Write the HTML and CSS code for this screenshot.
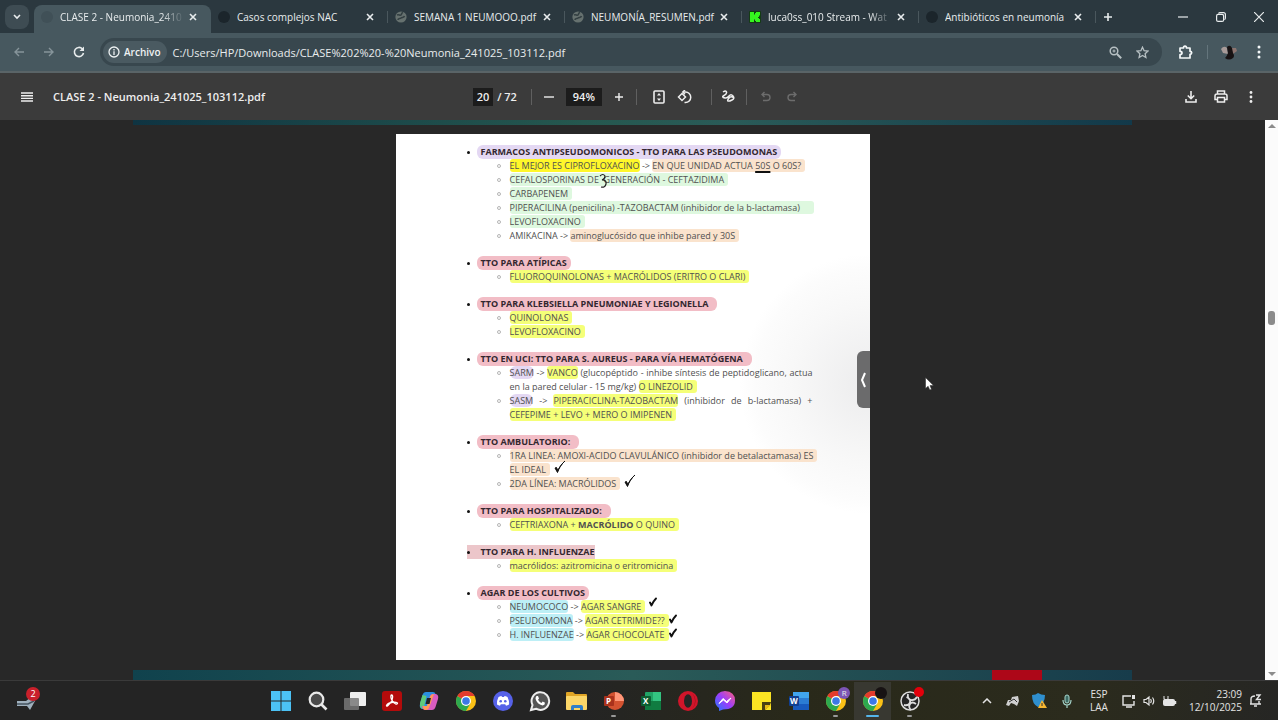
FILE: index.html
```
<!DOCTYPE html>
<html lang="es">
<head>
    <meta charset="UTF-8">
    <meta name="viewport" content="width=device-width, initial-scale=1.0">
    <title>CLASE 2 - Neumonia_241025_103112.pdf</title>
    <link rel="stylesheet" href="styles.css">
</head>
<body>

<svg class="defs" aria-hidden="true">
    <defs>
        <symbol id="close" viewBox="0 0 8 8"><path d="M1 1l6 6M7 1l-6 6" stroke="currentColor" stroke-width="1.6"/></symbol>
        <symbol id="globe" viewBox="0 0 12 12">
            <circle cx="6" cy="6" r="5.6" fill="#66716f"/>
            <path d="M2 4c2-1 3 1 4 0s0-2 2-2.500M3 9c0-2 2-1 3-2s3 0 3.500-2" stroke="#333f42" stroke-width="1.600" fill="none"/>
        </symbol>
        <symbol id="chrome" viewBox="0 0 20 20">
            <circle cx="10" cy="10" r="10" fill="#fbc116"/>
            <path d="M10 10L1.340 5A10 10 0 0 0 10 20l4.300-7.500z" fill="#2da94f"/>
            <path d="M10 10L1.340 5A10 10 0 0 1 18.660 5H10z" fill="#e33b2e"/>
            <circle cx="10" cy="10" r="5" fill="#fff"/>
            <circle cx="10" cy="10" r="3.800" fill="#3b78e7"/>
        </symbol>
        <symbol id="tick" viewBox="0 0 12 14"><path d="M1 8l2.500 4.500C5 8 7.500 4 11 1 8 3.500 5.500 7 3.800 10.500L2.500 7.500z" fill="#111" stroke="#111" stroke-width="1" stroke-linejoin="round"/></symbol>
        <symbol id="bold-tick" viewBox="0 0 8 10"><path d="M1 5.500L2.500 8.500Q4 4.500 7 1.500" fill="none" stroke="#111" stroke-width="1.900" stroke-linecap="round" stroke-linejoin="round"/></symbol>
    </defs>
</svg>

<header class="tabstrip">
    <button class="tab-search" aria-label="Buscar pestañas"><svg width="8" height="6" viewBox="0 0 8 6"><path d="M1 1l3 3 3-3" fill="none" stroke="currentColor" stroke-width="1.600"/></svg></button>
    <nav class="tabs">
        <div class="tab active"><i class="favicon faint"></i><a href="#">CLASE 2 - Neumonia_2410</a><button aria-label="Cerrar"><svg width="8" height="8"><use href="#close"/></svg></button></div>
        <div class="tab"><i class="favicon"></i><a href="#">Casos complejos NAC</a><button aria-label="Cerrar"><svg width="8" height="8"><use href="#close"/></svg></button></div>
        <div class="tab"><svg class="favicon-svg" width="12" height="12"><use href="#globe"/></svg><a href="#">SEMANA 1 NEUMOOO.pdf</a><button aria-label="Cerrar"><svg width="8" height="8"><use href="#close"/></svg></button></div>
        <div class="tab"><svg class="favicon-svg" width="12" height="12"><use href="#globe"/></svg><a href="#">NEUMONÍA_RESUMEN.pdf</a><button aria-label="Cerrar"><svg width="8" height="8"><use href="#close"/></svg></button></div>
        <div class="tab"><svg class="favicon-svg" width="12" height="12" viewBox="0 0 12 12"><rect width="12" height="12" rx="1" fill="#143c14"/><path d="M1 1h4v2.500h1V2h1V1h4v3.500h-1V6H9v1h1v1h1v3H7v-1H6V8.500H5V11H1z" fill="#35f51f"/></svg><a href="#">luca0ss_010 Stream - Wat</a><button aria-label="Cerrar"><svg width="8" height="8"><use href="#close"/></svg></button></div>
        <div class="tab"><i class="favicon"></i><a href="#">Antibióticos en neumonía</a><button aria-label="Cerrar"><svg width="8" height="8"><use href="#close"/></svg></button></div>
    </nav>
    <button class="new-tab" aria-label="Nueva pestaña"><svg width="10" height="10" viewBox="0 0 10 10"><path d="M5 1v8M1 5h8" stroke="currentColor" stroke-width="1.600"/></svg></button>
    <div class="window-buttons">
        <button aria-label="Minimizar"><svg width="10" height="10" viewBox="0 0 10 10"><path d="M0 5h10" stroke="currentColor" stroke-width="1.200"/></svg></button>
        <button aria-label="Restaurar"><svg width="10" height="10" viewBox="0 0 10 10" fill="none" stroke="currentColor" stroke-width="1.200"><rect x=".6" y="2.400" width="7" height="7" rx="1.500"/><path d="M2.500 1.500Q3 .6 4 .6h3.400q2 0 2 2V6q0 1.200-1 1.600"/></svg></button>
        <button aria-label="Cerrar ventana"><svg width="10" height="10" viewBox="0 0 10 10"><path d="M0 0l10 10M10 0L0 10" stroke="currentColor" stroke-width="1.200"/></svg></button>
    </div>
</header>

<div class="toolbar">
    <button class="dim" aria-label="Atrás"><svg width="10" height="10" viewBox="0 0 10 10"><path d="M10 5H1M5 1L1 5l4 4" fill="none" stroke="currentColor" stroke-width="1.400"/></svg></button>
    <button class="dim" aria-label="Adelante"><svg width="10" height="10" viewBox="0 0 10 10"><path d="M0 5h9M5 1l4 4-4 4" fill="none" stroke="currentColor" stroke-width="1.400"/></svg></button>
    <button aria-label="Recargar"><svg width="12" height="12" viewBox="0 0 12 12"><path d="M10.500 7A4.600 4.600 0 1 1 9.300 2.800L10.500 4" fill="none" stroke="currentColor" stroke-width="1.600"/><path d="M11 .5v4.500H6.500z" fill="currentColor"/></svg></button>
    <div class="address">
        <button class="chip"><svg width="12" height="12" viewBox="0 0 12 12"><circle cx="6" cy="6" r="5" fill="none" stroke="currentColor" stroke-width="1.300"/><path d="M6 5.300V9M6 3v1.400" stroke="currentColor" stroke-width="1.300"/></svg>Archivo</button>
        <input type="text" aria-label="Dirección" value="C:/Users/HP/Downloads/CLASE%202%20-%20Neumonia_241025_103112.pdf">
        <button aria-label="Zoom"><svg width="13" height="13" viewBox="0 0 13 13" fill="none" stroke="currentColor" stroke-width="1.500"><circle cx="5" cy="5" r="3.800"/><path d="M8 8l4.200 4.200" stroke-width="2"/><path d="M3.500 5h3M5 3.500v3" stroke-width="1"/></svg></button>
        <button aria-label="Favoritos"><svg width="13" height="13" viewBox="0 0 13 13"><path d="M6.500 1.200l1.600 3.500 3.900.4-2.900 2.600.8 3.800-3.400-2-3.400 2 .8-3.800L1 5.100l3.900-.4z" fill="none" stroke="currentColor" stroke-width="1.300"/></svg></button>
    </div>
    <button class="bright" aria-label="Extensiones"><svg width="15" height="15" viewBox="0 0 15 15"><path d="M2 3h3.500q0-1.800 1.500-1.800T8.500 3H12v3.300q1.700 0 1.700 1.500T12 9.300V13H2V9.500q2 0 2-1.600T2 6.300z" fill="none" stroke="currentColor" stroke-width="1.700" stroke-linejoin="round"/></svg></button>
    <span class="separator"></span>
    <button class="avatar" aria-label="Perfil"><svg width="16" height="16" viewBox="0 0 16 16"><path d="M0 5q3-4 6-1l1 6-5-1z" fill="#a79a98"/><path d="M10 4l5 0 1 3-4 3z" fill="#8b7470"/><path d="M6 3q3-3 5 1l1 5q2 3 0 5-4 3-8 0 2-2 3-5z" fill="#171213"/></svg></button>
    <button class="bright menu" aria-label="Menú"><svg width="4" height="14" viewBox="0 0 4 14" fill="currentColor"><circle cx="2" cy="2" r="1.500"/><circle cx="2" cy="7" r="1.500"/><circle cx="2" cy="12" r="1.500"/></svg></button>
</div>

<div class="pdf-bar">
    <div class="pdf-left">
        <button aria-label="Menú lateral"><svg width="12" height="10" viewBox="0 0 12 10"><path d="M0 1h12M0 3.700h12M0 6.400h12M0 9h12" stroke="currentColor" stroke-width="1.400"/></svg></button>
        <h1>CLASE 2 - Neumonia_241025_103112.pdf</h1>
    </div>
    <div class="pdf-center">
        <input class="page-number" type="text" aria-label="Página" value="20">
        <span class="page-total">/ 72</span>
        <span class="separator"></span>
        <button aria-label="Alejar"><svg width="10" height="10" viewBox="0 0 10 10"><path d="M0 5h10" stroke="currentColor" stroke-width="1.400"/></svg></button>
        <input class="zoom-level" type="text" aria-label="Nivel de zoom" value="94%">
        <button aria-label="Acercar"><svg width="10" height="10" viewBox="0 0 10 10"><path d="M5 1v8M1 5h8" stroke="currentColor" stroke-width="1.400"/></svg></button>
        <span class="separator"></span>
        <button class="fit" aria-label="Ajustar a la página"><svg width="12" height="14" viewBox="0 0 12 14"><rect x="1" y="1" width="10" height="12" rx="1" fill="none" stroke="currentColor" stroke-width="1.600"/><path d="M6 3l2 2.500H4zM6 11l2-2.500H4z" fill="currentColor"/></svg></button>
        <button class="rotate" aria-label="Girar"><svg width="15" height="14" viewBox="0 0 15 14" fill="none" stroke="currentColor" stroke-width="1.500"><path d="M5 3.500L8.500 7 5 10.500 1.500 7z"/><path d="M6 2h2.500a5 5 0 0 1 0 10.500H7.500"/><path d="M8 0L5.800 2 8 4.200"/></svg></button>
        <span class="separator"></span>
        <button aria-label="Dibujar"><svg width="13" height="13" viewBox="0 0 13 13"><path d="M1 2q3-2 3.500 0T2 5.500 3 8q2 .5 4-2t4 0-1 4-4 1 1-3 5 0" fill="none" stroke="currentColor" stroke-width="1.500"/></svg></button>
        <span class="separator"></span>
        <button class="off" aria-label="Deshacer"><svg width="10" height="11" viewBox="0 0 10 11"><path d="M3.500 1L1 3.500 3.500 6M1 3.500h5a3 3 0 0 1 0 6H2" fill="none" stroke="currentColor" stroke-width="1.400"/></svg></button>
        <button class="off" aria-label="Rehacer"><svg width="10" height="11" viewBox="0 0 10 11"><path d="M6.500 1L9 3.500 6.500 6M9 3.500H4a3 3 0 0 0 0 6h4" fill="none" stroke="currentColor" stroke-width="1.400"/></svg></button>
    </div>
    <div class="pdf-right">
        <button aria-label="Descargar"><svg width="12" height="12" viewBox="0 0 12 12"><path d="M6 0v7M2.800 4.500L6 7.700l3.200-3.200M1 8v3h10V8" fill="none" stroke="currentColor" stroke-width="1.600"/></svg></button>
        <button aria-label="Imprimir"><svg width="14" height="13" viewBox="0 0 14 13" fill="none" stroke="currentColor" stroke-width="1.500"><path d="M3.500 4V1h7v3M3.500 9.500H1V6q0-2 2-2h8q2 0 2 2v3.500h-2.500"/><path d="M3.500 7.500h7V12h-7z"/></svg></button>
        <button aria-label="Más"><svg width="4" height="12" viewBox="0 0 4 12" fill="currentColor"><circle cx="2" cy="1.500" r="1.400"/><circle cx="2" cy="6" r="1.400"/><circle cx="2" cy="10.500" r="1.400"/></svg></button>
    </div>
</div>

<main class="viewer">
    <div class="pages">
        <div class="slide previous"></div>
        <article class="page">
            <section>
                <h2><mark class="purple">FARMACOS ANTIPSEUDOMONICOS - TTO PARA LAS PSEUDOMONAS</mark></h2>
                <ul>
                    <li><mark class="strong">EL MEJOR ES CIPROFLOXACINO</mark> -&gt; <mark class="orange">EN QUE UNIDAD ACTUA <u>50S</u> O 60S?</mark></li>
                    <li><mark class="green">CEFALOSPORINAS DE<svg class="note three" width="9" height="16" viewBox="0 0 9 16"><path d="M1 3q3-3 5 0 0 3-3 4 5 0 4 4-1 4-5 3" fill="none" stroke="#222" stroke-width="1.200"/></svg> &nbsp;GENERACIÓN - CEFTAZIDIMA</mark></li>
                    <li><mark class="green">CARBAPENEM</mark></li>
                    <li class="one-line"><mark class="green long">PIPERACILINA (penicilina) -TAZOBACTAM (inhibidor de la b-lactamasa)</mark></li>
                    <li><mark class="green">LEVOFLOXACINO</mark></li>
                    <li>AMIKACINA -&gt; <mark class="orange">aminoglucósido que inhibe pared y 30S</mark></li>
                </ul>
            </section>
            <section>
                <h2><mark class="pink">TTO PARA ATÍPICAS</mark></h2>
                <ul>
                    <li><mark>FLUOROQUINOLONAS + MACRÓLIDOS (ERITRO O CLARI)</mark></li>
                </ul>
            </section>
            <section>
                <h2><mark class="pink wide">TTO PARA KLEBSIELLA PNEUMONIAE Y LEGIONELLA</mark></h2>
                <ul>
                    <li><mark>QUINOLONAS</mark></li>
                    <li><mark>LEVOFLOXACINO</mark></li>
                </ul>
            </section>
            <section>
                <h2><mark class="pink wide">TTO EN UCI: TTO PARA S. AUREUS - PARA VÍA HEMATÓGENA</mark></h2>
                <ul>
                    <li><mark class="purple">SARM</mark> -&gt; <mark>VANCO</mark> (glucopéptido - inhibe síntesis de peptidoglicano, actua en la pared celular - 15 mg/kg) <mark>O LINEZOLID</mark></li>
                    <li><mark class="purple">SASM</mark> -&gt; <mark>PIPERACICLINA-TAZOBACTAM</mark> (inhibidor de b-lactamasa) + <mark>CEFEPIME + LEVO + MERO O IMIPENEN</mark></li>
                </ul>
            </section>
            <section>
                <h2><mark class="pink wide">TTO AMBULATORIO:</mark></h2>
                <ul>
                    <li class="one-line"><mark class="orange">1RA LINEA: AMOXI-ACIDO CLAVULÁNICO (inhibidor de betalactamasa) ES<br>EL IDEAL</mark><svg class="note" width="12" height="14"><use href="#tick"/></svg></li>
                    <li><mark class="orange">2DA LÍNEA: MACRÓLIDOS</mark><svg class="note" width="12" height="14"><use href="#tick"/></svg></li>
                </ul>
            </section>
            <section>
                <h2><mark class="pink wide">TTO PARA HOSPITALIZADO:</mark></h2>
                <ul>
                    <li><mark>CEFTRIAXONA + <b>MACRÓLIDO</b> O QUINO</mark></li>
                </ul>
            </section>
            <section>
                <h2><mark class="rose">TTO PARA H. INFLUENZAE</mark></h2>
                <ul>
                    <li><mark>macrólidos: azitromicina o eritromicina</mark></li>
                </ul>
            </section>
            <section>
                <h2><mark class="pink">AGAR DE LOS CULTIVOS</mark></h2>
                <ul>
                    <li><mark class="blue">NEUMOCOCO</mark> -&gt; <mark>AGAR SANGRE</mark><svg class="note" width="8" height="10"><use href="#bold-tick"/></svg></li>
                    <li><mark class="blue">PSEUDOMONA</mark> -&gt; <mark>AGAR CETRIMIDE??</mark><svg class="note near" width="8" height="10"><use href="#bold-tick"/></svg></li>
                    <li><mark class="blue">H. INFLUENZAE</mark> -&gt; <mark>AGAR CHOCOLATE</mark><svg class="note near" width="8" height="10"><use href="#bold-tick"/></svg></li>
                </ul>
            </section>
            <button class="handle" aria-label="Abrir panel"><svg width="6" height="16" viewBox="0 0 6 16"><path d="M5 1L2 8l3 7" fill="none" stroke="#fff" stroke-width="2"/></svg></button>
        </article>
        <div class="slide next"></div>
    </div>
    <div class="scrollbar"><span class="arrow up"></span><span class="thumb"></span><span class="arrow down"></span></div>
    <svg class="cursor" width="9" height="14" viewBox="0 0 9 14"><path d="M.5.5v11l2.600-2.300L4.800 13l1.700-.8L5 8.600h3.500z" fill="#fff" stroke="#222" stroke-width=".5"/></svg>
</main>

<footer class="taskbar">
    <div class="widgets">
        <button aria-label="Widgets"><svg width="24" height="24" viewBox="0 0 24 24"><path d="M1 12h9l4-3 5 3-5 9-3-4H1z" fill="#9fb0bd"/><path d="M1 15h11l6-3" stroke="#44525e" stroke-width="1.500" fill="none"/></svg><span class="badge">2</span></button>
    </div>
    <div class="apps">
        <button aria-label="Inicio"><svg width="20" height="20" viewBox="0 0 20 20" fill="#4cc2f5"><path d="M0 0h9.500v9.500H0zM10.500 0H20v9.500h-9.500zM0 10.500h9.500V20H0zM10.500 10.500H20V20h-9.500z"/></svg></button>
        <button aria-label="Buscar"><svg width="20" height="20" viewBox="0 0 20 20"><circle cx="8.500" cy="8.500" r="6.800" fill="#4b4b4b" stroke="#e9e9e9" stroke-width="2.200"/><path d="M13.500 13.500l5 5" stroke="#e9e9e9" stroke-width="2.600"/></svg></button>
        <button aria-label="Vista de tareas"><svg width="22" height="20" viewBox="0 0 22 20"><rect x="6" y="1" width="16" height="14" rx="1" fill="#eee"/><rect x="0" y="7" width="15" height="12" rx="1" fill="#777" opacity=".85"/></svg></button>
        <button aria-label="Acrobat"><svg width="20" height="20" viewBox="0 0 20 20"><rect width="20" height="20" rx="3" fill="#b30b0b"/><path d="M9.500 4q1.500 0 1 3-.5 4-5 8-1 .5-1-.5 1-2 5-3 4-.8 6 .5 0 1.500-2 .8-3.500-2-4.500-6-.3-2.800.5-2.800z" fill="none" stroke="#fff" stroke-width="1.300"/></svg></button>
        <button aria-label="Copilot"><svg width="20" height="20" viewBox="0 0 20 20"><path d="M7 1h7q2 0 2.500 2l.8 3H12L9 16q-.6 2-3 2H3q-3-1-2-5L3.500 4Q4.500 1 7 1z" fill="#2a8fe0"/><path d="M1 12l2.500-8 4 1-2 9-2 4q-3-1-2.500-6z" fill="#5fca7b"/><path d="M13 19H6q-2 0-2.500-2l-.5-2h5L11 5q.6-2 3-2h3q3 1 2 5l-2.500 8q-1 3-3.500 3z" fill="#d95cc0"/><path d="M4 15h4l3-9q1-3 4-3l-5 14q-1 2-3 2H6q-2-.6-2-4z" fill="#ff9a55"/><path d="M8 7h4l-1.500 6h-4z" fill="#252525"/></svg></button>
        <button aria-label="Chrome"><svg width="20" height="20"><use href="#chrome"/></svg></button>
        <button aria-label="Discord"><svg width="20" height="20" viewBox="0 0 20 20"><circle cx="10" cy="10" r="10" fill="#5661e8"/><path d="M5.500 6q2-1 3-1l.5 1h2l.5-1q1 0 3 1 2 4 1.500 7.500-1.500 1-3 1.200l-.8-1.400H7.800L7 14.700q-1.500-.2-3-1.200Q3.500 10 5.500 6z" fill="#fff"/><circle cx="7.700" cy="10.200" r="1.300" fill="#5661e8"/><circle cx="12.300" cy="10.200" r="1.300" fill="#5661e8"/></svg></button>
        <button aria-label="WhatsApp"><svg width="22" height="22" viewBox="0 0 22 22"><path d="M2 20l1.500-5A8.800 8.800 0 1 1 7 18.700z" fill="#555" stroke="#eee" stroke-width="2"/><path d="M7.500 6l1.500 0 1 2.500-1 1.200q1.500 2.500 3.500 3.200l1.200-1.400 2.300 1.200q0 2.500-2.500 2.700Q8 14.500 6.500 8.800 6.500 7 7.500 6z" fill="#fff"/></svg></button>
        <button aria-label="Explorador"><svg width="22" height="20" viewBox="0 0 22 20"><path d="M0 2q0-1 1-1h6l2 2h11q1 0 1 1v5H0z" fill="#e0a526"/><rect x="0" y="5" width="21" height="14" rx="1" fill="#fbd668"/><path d="M5 19v-3q0-2 2-2h8q2 0 2 2v3z" fill="#2f7fc9"/><path d="M8 17h6v2H8z" fill="#fbd668"/></svg></button>
        <button class="running" aria-label="PowerPoint"><svg width="20" height="20" viewBox="0 0 20 20"><circle cx="11" cy="10" r="9" fill="#d35230"/><path d="M11 1a9 9 0 0 1 9 9h-9z" fill="#ff9678"/><rect y="5" width="10" height="10" rx="1" fill="#a9321c"/><text x="2" y="13" class="glyph">P</text></svg></button>
        <button aria-label="Excel"><svg width="20" height="20" viewBox="0 0 20 20"><rect x="4" y="1" width="16" height="18" rx="1" fill="#21a366"/><path d="M12 1h8v9h-8z" fill="#33c481"/><path d="M4 10h16v9H4z" fill="#107c41"/><rect y="5" width="10" height="10" rx="1" fill="#0c5f32"/><text x="2" y="13" class="glyph">X</text></svg></button>
        <button aria-label="Opera"><svg width="20" height="20" viewBox="0 0 20 20"><circle cx="10" cy="10" r="10" fill="#d0152a"/><ellipse cx="10" cy="10" rx="4" ry="6.800" fill="#252525"/><path d="M14 2.500a10 10 0 0 1 0 15q3-3 3-7.500t-3-7.500z" fill="#8e0b18"/></svg></button>
        <button aria-label="Messenger"><svg width="20" height="20" viewBox="0 0 20 20"><defs><linearGradient id="msn" x1="0" y1="1" x2="1" y2="0"><stop offset="0" stop-color="#1c7cff"/><stop offset=".5" stop-color="#9a3dfb"/><stop offset="1" stop-color="#ff5f7d"/></linearGradient></defs><path d="M10 0q10 .5 10 9.500T8 18.500L4 20v-3Q0 14 0 9.500 1 .5 10 0z" fill="url(#msn)"/><path d="M4 12.500L8 7.500l3.500 3L16 7l-4 5-3.500-3z" fill="#fff" stroke="#fff" stroke-width="1"/></svg></button>
        <button aria-label="Notas rápidas"><svg width="20" height="20" viewBox="0 0 20 20"><path d="M0 1h19v18H0z" fill="#fbe423"/><path d="M10 11h9l-1 3-5 5h-3z" fill="#4a4012"/><path d="M13 14h6l-6 5z" fill="#e8b914"/></svg></button>
        <button aria-label="Word"><svg width="20" height="20" viewBox="0 0 20 20"><rect x="4" y="1" width="16" height="18" rx="1" fill="#2b7cd3"/><path d="M4 1h16v6H4z" fill="#41a5ee"/><path d="M4 13h16v6H4z" fill="#185abd"/><rect y="5" width="10" height="10" rx="1" fill="#103f91"/><text x="1" y="13" class="glyph">W</text></svg></button>
        <button class="running" aria-label="Chrome, perfil R"><svg width="20" height="20"><use href="#chrome"/></svg><span class="profile violet">R</span></button>
        <button class="running current" aria-label="Chrome, perfil actual"><svg width="20" height="20"><use href="#chrome"/></svg><span class="profile dark"></span></button>
        <button class="running" aria-label="OBS"><svg width="20" height="20" viewBox="0 0 20 20"><circle cx="10" cy="10" r="9" fill="#252525" stroke="#ddd" stroke-width="1.500"/><path d="M8 3q-1 5 3 6 4 .5 6-3M4 14q5 1 6-2.500T6.500 6M16 13q-4-3-6 0t1 6" fill="none" stroke="#ddd" stroke-width="1.800"/></svg><span class="profile recording"></span></button>
    </div>
    <div class="tray">
        <button class="more" aria-label="Iconos ocultos"><svg width="10" height="6" viewBox="0 0 10 6"><path d="M1 5l4-4 4 4" fill="none" stroke="currentColor" stroke-width="1.500"/></svg></button>
        <button class="app-icon" aria-label="Mando"><svg width="15" height="12" viewBox="0 0 15 12"><path d="M1 10l2-5h3l1-3 6-1 1 5-2 5-3-2-3-1-2 3z" fill="#cfcfcf"/><path d="M4 7l5-3 3 3" stroke="#333" fill="none"/></svg></button>
        <button class="app-icon" aria-label="Seguridad"><svg width="15" height="15" viewBox="0 0 15 15"><path d="M0 2q4 0 6-2 3 2 7 2 0 9-7 12Q0 11 0 2z" fill="#2f8fce"/><path d="M10 7l5 8H6z" fill="#f7b731"/><path d="M10 10v3" stroke="#333"/></svg></button>
        <button class="app-icon" aria-label="Micrófono"><svg width="10" height="14" viewBox="0 0 10 14"><rect x="3" y="1" width="4" height="8" rx="2" fill="#3d6b64" stroke="#a6d5cb"/><path d="M1 6q0 5 4 5t4-5M5 11v3" fill="none" stroke="#a6d5cb" stroke-width="1.200"/></svg></button>
        <button class="language">ESP<br>LAA</button>
        <button class="status" aria-label="Red, volumen y batería">
            <svg width="14" height="14" viewBox="0 0 14 14"><path d="M9 2H1v9h11V7M4 13h6" fill="none" stroke="currentColor" stroke-width="1.400"/><path d="M10 1h3v4h-3z" fill="currentColor"/></svg>
            <svg width="12" height="12" viewBox="0 0 12 12" fill="none" stroke="currentColor" stroke-width="1.200"><path d="M1 4.500h2L6 2v8L3 7.500H1z"/><path d="M7.500 4q1.500 2 0 4M9.500 2.500q2.500 3.500 0 7"/></svg>
            <svg width="15" height="12" viewBox="0 0 15 12"><rect x="1" y="4" width="12" height="7" rx="2" fill="currentColor"/><path d="M13.500 6v3" stroke="currentColor" stroke-width="1.500"/><path d="M2 1v3q3 2 4 0V1" fill="none" stroke="currentColor"/></svg>
        </button>
        <button class="clock">23:09<br>12/10/2025</button>
        <button class="bell" aria-label="Notificaciones"><svg width="13" height="13" viewBox="0 0 13 13"><path d="M2 10V5q0-3 4-3M2 10h8V7M1 10h11M5 12h3M7 1h4L7.500 5.500H12" fill="none" stroke="currentColor" stroke-width="1.400"/></svg></button>
    </div>
</footer>

</body>
</html>
```
FILE: styles.css
```
* {
    box-sizing: border-box;
}

body {
    margin: 0;
    height: 100vh;
    display: flex;
    flex-direction: column;
    overflow: hidden;
    font-family: "Open Sans", "Noto Sans", sans-serif;
    font-size: 11px;
    color: #e8eced;
    background-color: #282828;
}

button,
input {
    font: inherit;
    color: inherit;
    background: none;
    border: none;
    padding: 0;
    margin: 0;
}

button {
    display: flex;
    align-items: center;
    justify-content: center;
    flex: none;
}

a {
    color: inherit;
    text-decoration: none;
}

.defs {
    position: absolute;
    width: 0;
    height: 0;
}

.separator {
    width: 1px;
    height: 16px;
    background-color: #606060;
}

/* tabs */
.tabstrip {
    display: flex;
    align-items: center;
    height: 33px;
    flex: none;
    background-color: #2b383f;
}

.tab-search {
    width: 24px;
    height: 24px;
    margin: 0 5px;
    border-radius: 8px;
    background-color: #3e4c53;
}

.tabs {
    display: flex;
    flex: 0 1 1062px;
    min-width: 0;
    align-self: stretch;
    padding-top: 5px;
}

.tab {
    display: flex;
    align-items: center;
    flex: 1 1 0;
    min-width: 0;
    gap: 7px;
    padding: 0 0 5px 7px;
}

.tab a {
    flex: 1;
    min-width: 0;
    margin-right: -5px;
    overflow: hidden;
    white-space: nowrap;
    font-size: 10px;
    line-height: 16px;
    font-weight: 500;
}

.tab.active {
    border-radius: 8px 8px 0 0;
    background-color: #47585f;
}

.tab.active a,
.tab:nth-child(5) a {
    mask-image: linear-gradient(to right, #000 80%, transparent 98%);
}

.tab::after {
    content: "";
    width: 1px;
    height: 12px;
    margin-left: 6px;
    background-color: #4a575d;
}

.tab.active::after {
    background-color: transparent;
}

.favicon {
    width: 12px;
    height: 12px;
    flex: none;
    border-radius: 50%;
    background-color: #1b252b;
}

.favicon.faint {
    background-color: #405057;
}

.favicon-svg {
    flex: none;
}

.new-tab {
    width: 24px;
    height: 24px;
}

.window-buttons {
    display: flex;
    margin-left: auto;
}

.window-buttons button {
    width: 38px;
    height: 32px;
}

/* address bar */
.toolbar {
    display: flex;
    align-items: center;
    flex: none;
    height: 40px;
    padding: 0 15px 0 4px;
    background-color: #47585f;
    border-bottom: 2px solid #5a6467;
}

.toolbar > button {
    width: 30px;
}

.toolbar .dim {
    color: #86949a;
}

.toolbar .bright {
    color: #f4f8f9;
}

.toolbar .menu {
    width: 8px;
    margin-left: 18px;
}

.toolbar .separator {
    height: 14px;
    margin: 0 7px;
    background-color: #64757c;
}

.toolbar .avatar {
    width: 16px;
    margin-left: 6px;
}

.address {
    display: flex;
    align-items: center;
    flex: 1;
    height: 28px;
    margin: 0 8px 0 6px;
    padding: 0 6px 0 3px;
    border-radius: 14px;
    background-color: #38474e;
}

.address input {
    flex: 1;
    min-width: 0;
    font-size: 11px;
}

.address > button {
    width: 27px;
    color: #b7c0c3;
}

.address .chip {
    width: auto;
    height: 22px;
    gap: 4px;
    margin-right: 5px;
    padding: 0 7px 0 5px;
    border-radius: 11px;
    font-size: 10px;
    font-weight: 600;
    color: #eef2f3;
    background-color: #4a5a61;
}

/* pdf toolbar */
.pdf-bar {
    display: grid;
    grid-template-columns: 1fr auto 1fr;
    align-items: center;
    flex: none;
    height: 47px;
    background-color: #3b3b3b;
    color: #eee;
}

.pdf-left,
.pdf-center,
.pdf-right {
    display: flex;
    align-items: center;
}

.pdf-left {
    gap: 20px;
    padding-left: 21px;
}

.pdf-left h1 {
    margin: 0;
    font-size: 11px;
    font-weight: 600;
    white-space: nowrap;
}

.pdf-center button {
    width: 26px;
    height: 24px;
}

.pdf-center .off {
    color: #6c6c6c;
}

.pdf-center .fit {
    margin-left: 5px;
}

.pdf-center .rotate {
    margin-right: 9px;
}

.pdf-center .separator {
    margin: 0 4px;
}

.pdf-center .separator + .off {
    margin-left: 2px;
}

.pdf-center input {
    height: 18px;
    text-align: center;
    font-weight: 600;
    background-color: #1c1c1c;
}

.pdf-center .page-number {
    width: 20px;
    margin-right: 4px;
}

.page-total {
    margin-right: 10px;
    font-weight: 600;
}

.pdf-center .zoom-level {
    width: 36px;
    margin: 0 4px;
}

.pdf-right {
    justify-content: flex-end;
    gap: 16px;
    padding-right: 20px;
}

.pdf-right button {
    width: 14px;
}

/* document */
.viewer {
    position: relative;
    display: flex;
    flex: 1;
    min-height: 0;
}

.pages {
    display: flex;
    flex-direction: column;
    align-items: center;
    flex: 1;
    overflow: hidden;
}

.slide {
    width: 79%;
    flex: none;
    background: linear-gradient(to right, #0f3442, #25584f 45%, #2a5b58 60%, #12394a);
}

.slide.previous {
    height: 5px;
    margin-bottom: 9px;
}

.slide.next {
    height: 20px;
    margin-top: 10px;
    background: linear-gradient(to right, transparent 86%, #ad0718 86%, #ad0718 91%, transparent 91%), linear-gradient(to right, #10424d, #2a5b58 50%, #173c4b);
}

.page {
    position: relative;
    display: flex;
    flex-direction: column;
    gap: 13px;
    flex: none;
    width: 474px;
    padding: 11px 57px 18px 70px;
    font-size: 9px;
    line-height: 14px;
    color: #505050;
    background: radial-gradient(circle at 474px 250px, #ececed, #f8f8f8 80px, #fcfcfc 115px, #fff 130px);
}

.page h2 {
    display: flex;
    align-items: center;
    gap: 11px;
    margin: 0;
    font-size: 9px;
    font-weight: 700;
    white-space: nowrap;
    color: #33272f;
}

.page h2::before {
    content: "";
    z-index: 1;
    width: 3px;
    height: 3px;
    margin-left: 1px;
    border-radius: 50%;
    background-color: #111;
}

.page ul {
    margin: 0;
    padding: 0 0 0 44px;
    list-style: none;
}

.page li {
    position: relative;
    text-align: justify;
}

.page .one-line {
    text-align: left;
    white-space: nowrap;
}

.one-line mark {
    box-decoration-break: clone;
    -webkit-box-decoration-break: clone;
}

.page li::before {
    content: "";
    position: absolute;
    top: 5px;
    left: -13px;
    width: 2px;
    height: 2px;
    border: 1px solid #b5b5b5;
    border-radius: 50%;
}

/* highlighter strokes */
mark {
    color: inherit;
    border-radius: 3px;
    background-color: #f5ff78;
}

li mark:last-of-type {
    padding-right: 4px;
}

h2 mark {
    margin-left: -4px;
    padding: 0 4px;
}

.strong {
    background-color: #fff72a;
}

.purple {
    border-radius: 6px;
    background-color: #e4d8f3;
}

.orange {
    background-color: #fae3cd;
}

.green {
    background-color: #def8df;
}

li .long:last-of-type {
    padding-right: 14px;
}

.pink {
    border-radius: 6px;
    background-color: #f2bdc6;
}

.wide {
    padding-right: 9px;
}

.rose {
    padding-left: 14px;
    padding-right: 0;
    margin-left: -14px;
    border-radius: 0;
    background-color: #ecc6ca;
}

.blue {
    background-color: #bdeff6;
}

.page u {
    text-decoration: underline 2px #111;
    text-underline-offset: 2px;
}

.note {
    position: absolute;
    margin-left: 4px;
    margin-top: -3px;
}

.note.near {
    margin-left: 0;
    margin-top: 0;
}

.note.three {
    margin: 0;
}

.handle {
    position: absolute;
    right: 0;
    top: 217px;
    width: 13px;
    height: 57px;
    border-radius: 6px 0 0 6px;
    background-color: #6b6b6c;
}

.scrollbar {
    display: flex;
    flex-direction: column;
    align-items: center;
    width: 13px;
    background-color: #fbfbfb;
}

.cursor {
    position: absolute;
    left: 925px;
    top: 257px;
}

.arrow {
    border: 4px solid transparent;
}

.arrow.up {
    border-bottom-color: #8b8b8b;
}

.arrow.down {
    margin-top: auto;
    border-top-color: #8b8b8b;
}

.thumb {
    width: 7px;
    height: 14px;
    margin-top: 183px;
    border-radius: 3px;
    background-color: #8b8b8b;
}

/* taskbar */
.taskbar {
    display: grid;
    grid-template-columns: 3fr auto 4fr;
    align-items: center;
    flex: none;
    height: 40px;
    background: linear-gradient(to right, #242424 45%, #29291a 62%, #2b2b1d 85%, #262624);
    border-top: 1px solid #3a3a3a;
}

.widgets {
    padding-left: 16px;
}

.widgets button {
    position: relative;
}

.badge {
    position: absolute;
    left: 10px;
    top: -2px;
    width: 14px;
    height: 14px;
    border-radius: 50%;
    font-size: 9px;
    line-height: 14px;
    color: #fff;
    background-color: #c9202b;
}

.apps {
    display: flex;
}

.apps button {
    position: relative;
    width: 37px;
    height: 38px;
}

.apps .running::after {
    content: "";
    position: absolute;
    bottom: 3px;
    width: 5px;
    height: 2px;
    border-radius: 1px;
    background-color: #999;
}

.apps .current {
    background-color: #383831;
}

.apps .current::after {
    width: 13px;
    background-color: #55b5ea;
}

.glyph {
    font-size: 8px;
    font-weight: 700;
    fill: #fff;
}

.profile {
    position: absolute;
    top: 5px;
    right: 4px;
    width: 12px;
    height: 12px;
    border-radius: 50%;
    font-size: 8px;
    line-height: 12px;
}

.violet {
    background-color: #7c55b5;
}

.dark {
    background-color: #171213;
}

.recording {
    width: 10px;
    height: 10px;
    background-color: #e3000b;
}

.tray {
    display: flex;
    align-items: center;
    justify-content: flex-end;
    padding-right: 16px;
    font-size: 10px;
    color: #e4e4e4;
}

.app-icon {
    width: 27px;
}

.more {
    margin-right: 7px;
}

.language {
    margin: 0 14px 0 10px;
    line-height: 13px;
}

.status {
    gap: 7px;
}

.clock {
    margin: 0 7px 0 12px;
    line-height: 13px;
    text-align: right;
}
```
